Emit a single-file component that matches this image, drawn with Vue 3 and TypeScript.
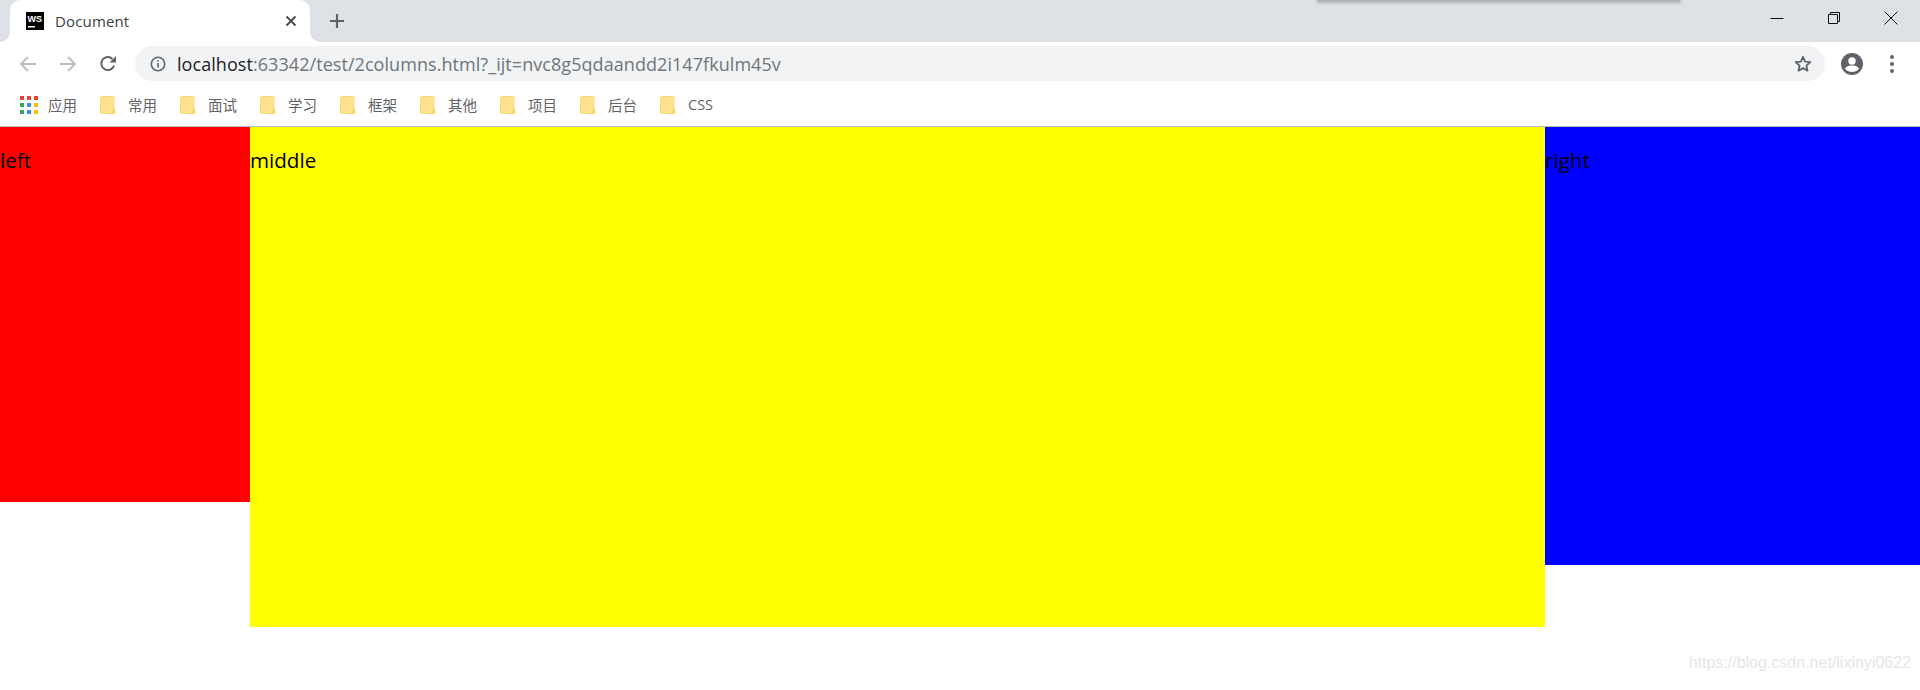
<script setup lang="ts">
const bookmarks: string[] = ['常用', '面试', '学习', '框架', '其他', '项目', '后台', 'CSS']
const appColors: string[] = ['#ea4335', '#ea4335', '#ea4335', '#34a853', '#4285f4', '#fbbc05', '#34a853', '#4285f4', '#fbbc05']
</script>

<template>
  <div class="page">
    <div class="tabstrip">
      <div class="tab">
        <svg class="favicon" width="18" height="18" viewBox="0 0 18 18">
          <rect width="18" height="18" fill="#000" />
          <text x="1.500" y="10" class="ws">WS</text>
          <rect x="2" y="14" width="7" height="1.500" fill="#fff" />
        </svg>
        <span class="tab-title">Document</span>
        <svg class="tab-close" width="12" height="12" viewBox="0 0 12 12">
          <path d="M1.500 1.500l9 9M10.500 1.500l-9 9" stroke="#45484d" stroke-width="1.800" fill="none" />
        </svg>
      </div>
      <svg class="new-tab" width="16" height="16" viewBox="0 0 16 16">
        <path d="M8 1v14M1 8h14" stroke="#5f6368" stroke-width="2.200" fill="none" />
      </svg>
      <div class="spacer"></div>
      <div class="shadow-strip"></div>
      <div class="win-controls">
        <svg width="14" height="14" viewBox="0 0 14 14"><path d="M0.500 7.500h13" stroke="#111" fill="none" /></svg>
        <svg width="14" height="14" viewBox="0 0 14 14"><path d="M1.500 3.500h9v9h-9zM3.500 3.500v-2h9v9h-2" stroke="#111" fill="none" /></svg>
        <svg width="14" height="14" viewBox="0 0 14 14"><path d="M0.500 0.500l13 13M13.500 0.500l-13 13" stroke="#111" fill="none" /></svg>
      </div>
    </div>

    <div class="toolbar">
      <svg class="nav" width="18" height="18" viewBox="0 0 18 18"><path d="M17 9H2M9 2L2 9l7 7" stroke="#bcbfc3" stroke-width="2" fill="none" /></svg>
      <svg class="nav fwd" width="18" height="18" viewBox="0 0 18 18"><path d="M1 9h15M9 2l7 7-7 7" stroke="#bcbfc3" stroke-width="2" fill="none" /></svg>
      <svg class="nav reload" width="18" height="18" viewBox="0 0 18 18">
        <path d="M15 10.500A6.500 6.500 0 1 1 13.400 4" stroke="#5f6368" stroke-width="2" fill="none" />
        <path d="M17 1v6.500h-6.500z" fill="#5f6368" />
      </svg>
      <div class="omnibox">
        <svg class="info" width="16" height="16" viewBox="0 0 16 16">
          <circle cx="8" cy="8" r="6.700" stroke="#5f6368" stroke-width="1.600" fill="none" />
          <path d="M8 7v4.500M8 4.200v1.600" stroke="#5f6368" stroke-width="1.600" fill="none" />
        </svg>
        <span class="url"><span class="host">localhost</span>:63342/test/2columns.html?_ijt=nvc8g5qdaandd2i147fkulm45v</span>
        <svg class="star" width="18" height="18" viewBox="0 0 18 18">
          <path d="M9 1.800l2.100 4.800 5.200.5-3.900 3.500 1.100 5.100L9 13.100l-4.500 2.600 1.100-5.100-3.900-3.500 5.200-.5z" stroke="#5f6368" stroke-width="1.800" fill="none" stroke-linejoin="round" />
        </svg>
      </div>
      <svg class="avatar" width="22" height="22" viewBox="0 0 22 22">
        <circle cx="11" cy="11" r="11" fill="#5f6368" />
        <circle cx="11" cy="8" r="3.700" fill="#fff" />
        <path d="M3.800 15.500c2-2.500 4.500-3 7.200-3s5.200.5 7.200 3c-1.500 2.200-4.200 3.500-7.200 3.500s-5.700-1.300-7.200-3.500z" fill="#fff" />
      </svg>
      <div class="menu"><i></i><i></i><i></i></div>
    </div>

    <div class="bookmarks">
      <div class="bm apps">
        <div class="grid"><i v-for="(c, i) in appColors" :key="i" :style="{ background: c }"></i></div>
        <span>应用</span>
      </div>
      <div v-for="b in bookmarks" :key="b" class="bm">
        <svg width="16" height="18" viewBox="0 0 16 18">
          <path d="M2 .5h10.500a1.500 1.500 0 0 1 1.500 1.500v14a1.500 1.500 0 0 1-1.500 1.500H2A1.500 1.500 0 0 1 .5 16V2A1.500 1.500 0 0 1 2 .5z" fill="#ffe28f" stroke="#fbd873" />
          <path d="M12.500 17.500v-3a1.200 1.200 0 0 1 2.500 0v2a1 1 0 0 1-1 1z" fill="#ffe28f" stroke="#f7cf5c" />
        </svg>
        <span>{{ b }}</span>
      </div>
    </div>

    <div class="columns">
      <div class="col left"><p>left</p></div>
      <div class="col middle"><p>middle</p></div>
      <div class="col right"><p>right</p></div>
    </div>
    <div class="watermark">https://blog.csdn.net/lixinyi0622</div>
  </div>
</template>

<style>
html, body { margin: 0; background: #fff; }
</style>

<style scoped>
.page {
  position: relative;
  width: 1920px;
  height: 690px;
  overflow: hidden;
  font-family: "Open Sans", "Noto Sans CJK SC", sans-serif;
}
.tabstrip {
  position: relative;
  display: flex;
  align-items: center;
  height: 42px;
  background: #dee1e6;
  padding-left: 10px;
  box-sizing: border-box;
}
.tab {
  position: relative;
  display: flex;
  align-items: center;
  align-self: stretch;
  width: 300px;
  box-sizing: border-box;
  padding: 0 13px 0 16px;
  background: #fff;
  border-radius: 10px 10px 0 0;
}
.tab::before,
.tab::after {
  content: "";
  position: absolute;
  bottom: 0;
  width: 10px;
  height: 10px;
}
.tab::before { left: -10px; background: radial-gradient(circle at 0 0, #dee1e6 9.500px, #fff 10px); }
.tab::after { right: -10px; background: radial-gradient(circle at 100% 0, #dee1e6 9.500px, #fff 10px); }
.favicon { flex: none; }
.ws { font: 700 9px "Liberation Sans", sans-serif; fill: #fff; }
.tab-title {
  flex: 1;
  margin-left: 11px;
  font-size: 15px;
  color: #3c4043;
  letter-spacing: 0.15px;
}
.new-tab { margin-left: 19px; }
.spacer { flex: 1; }
.shadow-strip {
  position: absolute;
  top: 0;
  left: 1318px;
  width: 362px;
  height: 1px;
  background: #a9adb3;
  box-shadow: 0 1px 3px 1px rgba(90, 94, 100, 0.4);
}
.win-controls {
  display: flex;
  gap: 43px;
  margin-right: 22px;
  margin-bottom: 6px;
}
.toolbar {
  display: flex;
  align-items: center;
  height: 43px;
  background: #fff;
  padding-left: 19px;
  box-sizing: border-box;
}
.nav { flex: none; }
.fwd { margin-left: 22px; }
.reload { margin-left: 22px; }
.omnibox {
  display: flex;
  align-items: center;
  flex: none;
  width: 1690px;
  height: 35px;
  margin-left: 18px;
  padding: 0 13px 0 15px;
  box-sizing: border-box;
  background: #f1f3f4;
  border-radius: 18px;
}
.url {
  flex: 1;
  margin-left: 11px;
  font-size: 18px;
  letter-spacing: 0.06px;
  color: #70757a;
  white-space: nowrap;
}
.host { color: #202124; }
.avatar { flex: none; margin-left: 16px; }
.menu {
  display: flex;
  flex-direction: column;
  gap: 3px;
  margin-left: 27px;
}
.menu i {
  width: 4px;
  height: 4px;
  border-radius: 50%;
  background: #5f6368;
}
.bookmarks {
  display: flex;
  align-items: center;
  height: 42px;
  padding-bottom: 2px;
  background: #fff;
  border-bottom: 1px solid #b8babe;
  box-sizing: border-box;
}
.bm {
  display: flex;
  align-items: center;
  width: 80px;
  flex: none;
  font-size: 14.500px;
  color: #5f6368;
}
.bm svg { flex: none; margin-left: 20px; }
.bm span { margin-left: 12px; white-space: nowrap; }
.apps { width: 80px; }
.grid {
  display: grid;
  grid-template-columns: repeat(3, 4px);
  gap: 3px;
  margin-left: 20px;
}
.grid i { width: 4px; height: 4px; }
.apps span { margin-left: 10px; }
.columns {
  position: relative;
  display: flex;
  align-items: flex-start;
}
.col p {
  margin: 0;
  padding-top: 20px;
  font-size: 20.600px;
  line-height: 27px;
  color: #000;
}
.left { width: 250px; height: 375px; background: #f00; }
.middle { width: 1295px; height: 500px; background: #ff0; }
.right { width: 375px; height: 438px; background: #00f; }
.watermark {
  position: absolute;
  right: 9px;
  bottom: 18px;
  font: 16px "Liberation Sans", sans-serif;
  color: #e6e6e6;
}
</style>
